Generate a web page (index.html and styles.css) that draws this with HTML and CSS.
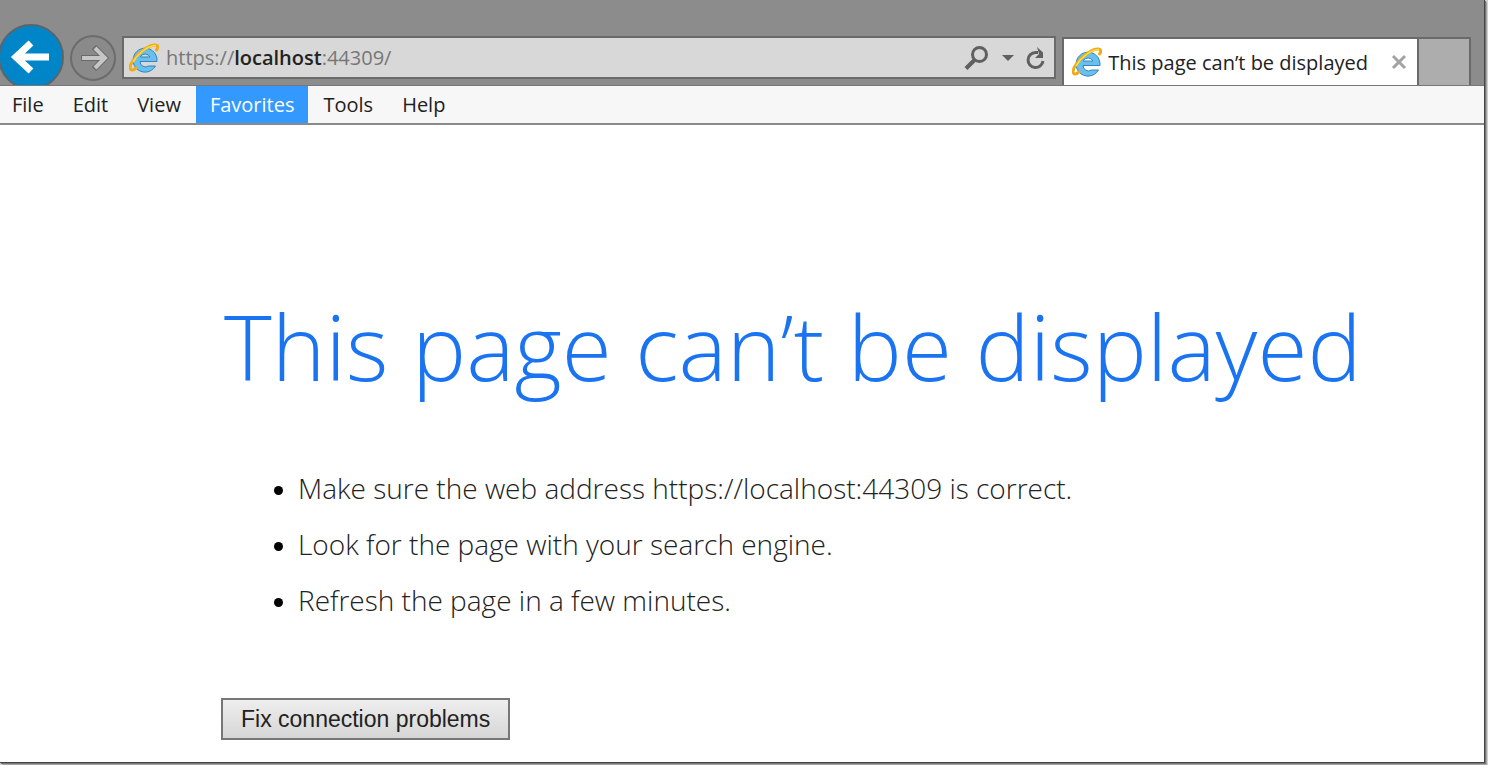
FILE: index.html
```html
<!DOCTYPE html>
<html lang="en">
<head>
    <meta charset="UTF-8">
    <meta name="viewport" content="width=device-width, initial-scale=1.0">
    <title>This page can’t be displayed</title>
    <link rel="stylesheet" href="styles.css">
</head>
<body>
    <!-- Browser logo, shared by the address bar and the tab -->
    <svg class="symbols" aria-hidden="true">
        <symbol id="logo" viewBox="0 0 30 30">
            <path fill-rule="evenodd" d="M28 18A12 12 0 1 0 26.500 23H19.500A5.500 5.500 0 0 1 11 18.500H28Z M11.200 14A5.500 5.500 0 0 1 21 14Z" fill="#6bbfec" stroke="#2f86c2" stroke-width="1"/>
            <path d="M7 25C1 30-1 25 4 17.500C10 8.500 21 1.500 26.500 2C29.500 2.500 29 5 27.500 7" fill="none" stroke="#f2ab18" stroke-width="3" stroke-linecap="round"/>
            <path d="M4 19C10 9 20 2.500 27 2.500" fill="none" stroke="#ffdd3c" stroke-width="1.500"/>
        </symbol>
    </svg>

    <div class="window">
        <header class="toolbar">
            <button class="back" type="button" aria-label="Back">
                <svg viewBox="0 0 66 66" width="66" height="66">
                    <circle cx="33" cy="33" r="32" fill="#0086c8" stroke="#5c646a" stroke-width="2"/>
                    <path d="M51 33H19M33 19L18 33L33 47" fill="none" stroke="#fff" stroke-width="7"/>
                </svg>
            </button>
            <button class="forward" type="button" aria-label="Forward">
                <svg viewBox="0 0 48 48" width="48" height="48">
                    <circle cx="24" cy="24" r="22" fill="#8a8a8a" stroke="#6c6c6c" stroke-width="2"/>
                    <path d="M12 24H35M25 13L36 24L25 35" fill="none" stroke="#6a6a6a" stroke-width="6"/>
                    <path d="M13 24H35M26 14L36 24L26 34" fill="none" stroke="#c6c6c6" stroke-width="4"/>
                </svg>
            </button>
            <form class="address-bar">
                <svg class="logo"><use href="#logo"/></svg>
                <div class="address">
                    <input type="text" id="address" aria-label="Address" value="https://localhost:44309/">
                    <label for="address">https://<b>localhost</b>:44309/</label>
                </div>
                <button type="button" aria-label="Search">
                    <svg viewBox="0 0 26 26" width="26" height="26" fill="none" stroke="#606060">
                        <circle cx="15.500" cy="9.500" r="7" stroke-width="3"/>
                        <path d="M10.500 15L2 23.500" stroke-width="4"/>
                    </svg>
                </button>
                <button type="button" aria-label="Show addresses">
                    <svg viewBox="0 0 12 8" width="12" height="8"><path d="M0 1H12L6 7Z" fill="#606060"/></svg>
                </button>
                <button type="button" aria-label="Refresh">
                    <svg viewBox="0 0 20 24" width="20" height="24">
                        <path d="M12 6.500H9.500A7.500 7.500 0 1 0 17 15" fill="none" stroke="#606060" stroke-width="3"/>
                        <path d="M11 1L17 6.500V12H9L13 8Z" fill="#606060"/>
                    </svg>
                </button>
            </form>
            <div class="tab">
                <svg class="logo"><use href="#logo"/></svg>
                <span>This page can’t be displayed</span>
                <button type="button" aria-label="Close tab">
                    <svg viewBox="0 0 16 16" width="16" height="16"><path d="M2 2L14 14M14 2L2 14" stroke="#a3a3a3" stroke-width="3"/></svg>
                </button>
            </div>
            <button class="new-tab" type="button" aria-label="New tab"></button>
        </header>

        <nav class="menu">
            <button type="button">File</button>
            <button type="button">Edit</button>
            <button type="button">View</button>
            <button class="active" type="button">Favorites</button>
            <button type="button">Tools</button>
            <button type="button">Help</button>
        </nav>

        <main>
            <h1>This page can’t be displayed</h1>
            <ul>
                <li>Make sure the web address https://localhost:44309 is correct.</li>
                <li>Look for the page with your search engine.</li>
                <li>Refresh the page in a few minutes.</li>
            </ul>
            <button class="fix" type="button">Fix connection problems</button>
        </main>
    </div>
</body>
</html>
```

FILE: styles.css
```css
* {
    box-sizing: border-box;
}

body {
    margin: 0;
    padding: 0 3px 3px 0;
    background-color: #d0d0d0;
    font-family: "Open Sans", "Noto Sans", sans-serif;
    font-size: 20px;
    color: #222;
}

button {
    padding: 0;
    border: none;
    background: none;
    font: inherit;
    color: inherit;
}

svg {
    display: block;
}

.symbols {
    display: none;
}

.window {
    display: flex;
    flex-direction: column;
    min-height: calc(100vh - 3px);
    border-right: 1px solid #444;
    border-bottom: 1px solid #444;
    background-color: #fff;
    box-shadow: 1px 1px 0 #777, 2px 2px 0 #a5a5a5;
}

.toolbar {
    display: flex;
    align-items: flex-end;
    height: 86px;
    padding-right: 13px;
    border-bottom: 1px solid #777;
    background-color: #8c8c8c;
}

/* the back button is cut off by the left and bottom edges */
.back {
    height: 61px;
    margin-left: -2px;
    overflow: hidden;
}

.forward {
    margin: 0 5px 3px;
}

.address-bar {
    display: flex;
    flex: 1;
    align-items: center;
    gap: 12px;
    height: 43px;
    margin-right: 6px;
    margin-bottom: 6px;
    padding: 0 8px 0 5px;
    border: 2px solid #6a6a6a;
    background-color: #d8d8d8;
}

.logo {
    flex: none;
    width: 30px;
    height: 30px;
}

.address {
    display: grid;
    flex: 1;
    align-items: center;
    margin-left: -5px;
}

.address input,
.address label {
    grid-area: 1 / 1;
    min-width: 0;
    padding: 0;
    border: none;
    background: none;
    font: inherit;
    color: #777;
}

/* the plain text shows only while the address is being edited */
.address input {
    opacity: 0;
}

.address input:focus {
    opacity: 1;
    outline: none;
}

.address input:focus + label {
    visibility: hidden;
}

.address b {
    font-weight: 600;
    color: #222;
}

.tab {
    display: flex;
    align-items: center;
    gap: 6px;
    height: 48px;
    padding: 0 10px 0 8px;
    border: 2px solid #6a6a6a;
    border-bottom: none;
    background-color: #fff;
    white-space: nowrap;
}

.tab button {
    margin-left: 17px;
}

.new-tab {
    width: 52px;
    height: 48px;
    border: 2px solid #6a6a6a;
    border-width: 2px 2px 0 0;
    background-color: #adadad;
}

.menu {
    display: flex;
    gap: 1px;
    height: 39px;
    border-bottom: 2px solid #8a8a8a;
    background-color: #f7f7f7;
}

.menu button {
    padding: 0 14px;
}

.menu button:first-child {
    padding-left: 12px;
}

.menu .active {
    background-color: #3399ff;
    color: #fff;
}

main {
    flex: 1;
    padding: 157px 20px 22px 221px;
}

h1 {
    margin: 0 0 0 3px;
    font-size: 91px;
    font-weight: 300;
    line-height: 128px;
    color: #1a73f0;
    white-space: nowrap;
}

ul {
    margin: 50px 0 70px;
    padding-left: 77px;
    font-size: 28px;
    font-weight: 300;
    line-height: 56px;
}

li::marker {
    font-size: 24px;
    color: #000;
}

.fix {
    height: 42px;
    padding: 0 18px;
    border: 2px solid #777;
    background: linear-gradient(#eee, #d6d6d6);
    font-family: "Liberation Sans", Arial, sans-serif;
    font-size: 23px;
}
```
